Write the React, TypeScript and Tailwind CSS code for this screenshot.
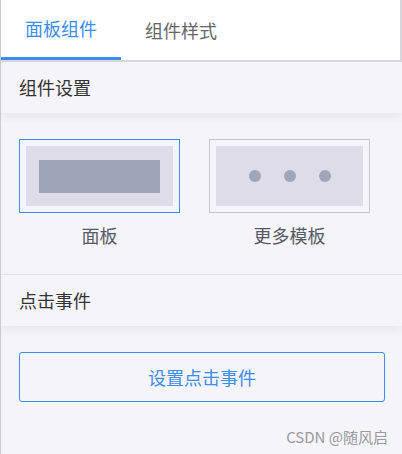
const font = { fontFamily: '"Noto Sans CJK SC", "Noto Sans", sans-serif' };

function SectionTitle({ children }: { children: React.ReactNode }) {
  return (
    <div className="relative z-10 h-[51px] flex items-center px-[18px] bg-[#f5f4fa] shadow-[0_5px_8px_rgba(0,0,0,0.05)]">
      <span className="text-[18px] text-[#333]">{children}</span>
    </div>
  );
}

export default function App() {
  return (
    <div className="w-[402px] h-[454px] bg-[#f5f4fa] border-l border-[#c9c9d0] relative overflow-hidden" style={font}>
      <div className="h-[62px] bg-white border-r-2 border-b-2 border-[#d6d6dc] flex">
        <div className="w-[120px] h-full flex items-center justify-center border-b-[3px] border-[#3b8ef0] text-[18px] text-[#3b8ef0]">
          面板组件
        </div>
        <div className="w-[120px] h-full flex items-center justify-center text-[18px] text-[#666]">
          组件样式
        </div>
      </div>

      <SectionTitle>组件设置</SectionTitle>

      <div className="h-[162px] border-b border-[#e4e3ea] pt-[26px] px-[18px] flex gap-[29px]">
        <div className="flex flex-col items-center">
          <div className="w-[161px] h-[74px] border border-[#3b8ef0] p-[6px]">
            <div className="w-full h-full bg-[#dddce8] flex items-center justify-center">
              <div className="w-[121px] h-[33px] bg-[#9fa5b9]" />
            </div>
          </div>
          <span className="mt-[9px] text-[18px] text-[#555a66]">面板</span>
        </div>
        <div className="flex flex-col items-center">
          <div className="w-[161px] h-[74px] border border-[#c6c6cf] p-[6px]">
            <div className="w-full h-full bg-[#dddce8] flex items-center justify-center gap-[23px]">
              <div className="w-[12px] h-[12px] rounded-full bg-[#a0a6ba]" />
              <div className="w-[12px] h-[12px] rounded-full bg-[#a0a6ba]" />
              <div className="w-[12px] h-[12px] rounded-full bg-[#a0a6ba]" />
            </div>
          </div>
          <span className="mt-[9px] text-[18px] text-[#555a66]">更多模板</span>
        </div>
      </div>

      <SectionTitle>点击事件</SectionTitle>

      <div className="px-[18px] pt-[26px]">
        <button className="w-[366px] h-[50px] border border-[#3b8ef0] rounded-[3px] bg-transparent text-[18px] text-[#3b8ef0]">
          设置点击事件
        </button>
      </div>

      <div className="absolute right-[14px] bottom-[6px] text-[15px] text-[#9a9a9a]">CSDN @随风启</div>
    </div>
  );
}
